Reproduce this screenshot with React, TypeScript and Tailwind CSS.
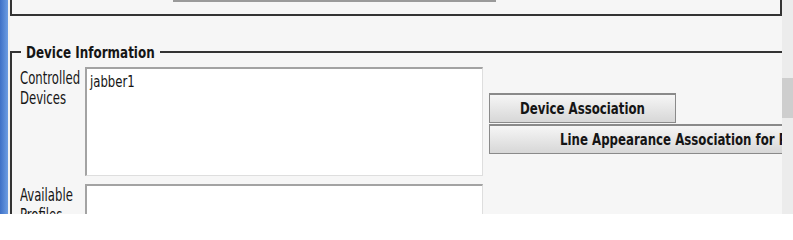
export default function App() {
  return (
    <div className="flex h-[214px] w-[793px] overflow-hidden bg-[#f6f6f6] font-['DejaVu_Sans_Condensed','Liberation_Sans',sans-serif] text-[#151515]">
      {/* blue rail on the left */}
      <div className="w-[8px] shrink-0 bg-linear-to-r from-[#3e70c6] to-[#6c9ce2]" />
      <div className="w-[2px] shrink-0 bg-[#f1f1f1]" />

      <div className="flex w-[772px] shrink-0 flex-col overflow-hidden">
        {/* bottom of the section above */}
        <div className="h-[16px] shrink-0 border-x-2 border-b-2 border-[#333]">
          <div className="ml-[161px] h-[2px] w-[323px] bg-[#9a9a9a]" />
        </div>

        <fieldset className="mt-[28px] border-l-2 border-t-2 border-[#333] pl-[8px]">
          <legend className="ml-[1px] px-[5px] text-[13.3px] font-bold leading-[16px]">
            <span className="inline-block translate-y-[1px] scale-y-[1.15]">Device Information</span>
          </legend>

          <div className="mt-[7px] flex">
            <div className="w-[65px] shrink-0 pt-[2px] text-[13px] leading-[20px]">
              <span className="block scale-y-[1.3]">Controlled</span>
              <span className="block scale-y-[1.3]">Devices</span>
            </div>
            <div className="h-[109px] w-[398px] shrink-0 border-b border-l-2 border-r border-t-2 border-b-[#dedede] border-l-[#a3a3a3] border-r-[#dedede] border-t-[#a3a3a3] bg-white px-[3px] pt-[3px] text-[13px] leading-[20px]">
              <span className="block scale-y-[1.2]">jabber1</span>
            </div>
            <div className="ml-[6px] mt-[26px] flex flex-col">
              <button className="h-[30px] w-[187px] border border-t-2 border-[#8a8a8a] bg-linear-to-b from-[#f6f6f6] to-[#d7d7d7] text-[13.1px] font-bold leading-[20px]">
                <span className="inline-block scale-y-[1.25]">Device Association</span>
              </button>
              <button className="mt-[1px] h-[30px] whitespace-nowrap border border-t-2 border-[#8a8a8a] bg-linear-to-b from-[#f6f6f6] to-[#d7d7d7] px-[70px] text-[13.1px] font-bold leading-[20px]">
                <span className="inline-block scale-y-[1.25]">Line Appearance Association for Presence</span>
              </button>
            </div>
          </div>

          <div className="mt-[8px] flex">
            <div className="w-[65px] shrink-0 pt-[2px] text-[13px] leading-[20px]">
              <span className="block scale-y-[1.3]">Available</span>
              <span className="block scale-y-[1.3]">Profiles</span>
            </div>
            <div className="h-[109px] w-[398px] shrink-0 border-b border-l-2 border-r border-t-2 border-b-[#dedede] border-l-[#a3a3a3] border-r-[#dedede] border-t-[#a3a3a3] bg-white" />
          </div>
        </fieldset>
      </div>

      {/* page scrollbar */}
      <div className="w-[11px] shrink-0 bg-[#ececec] pt-[78px]">
        <div className="h-[40px] bg-[#cecece]" />
      </div>
    </div>
  )
}
